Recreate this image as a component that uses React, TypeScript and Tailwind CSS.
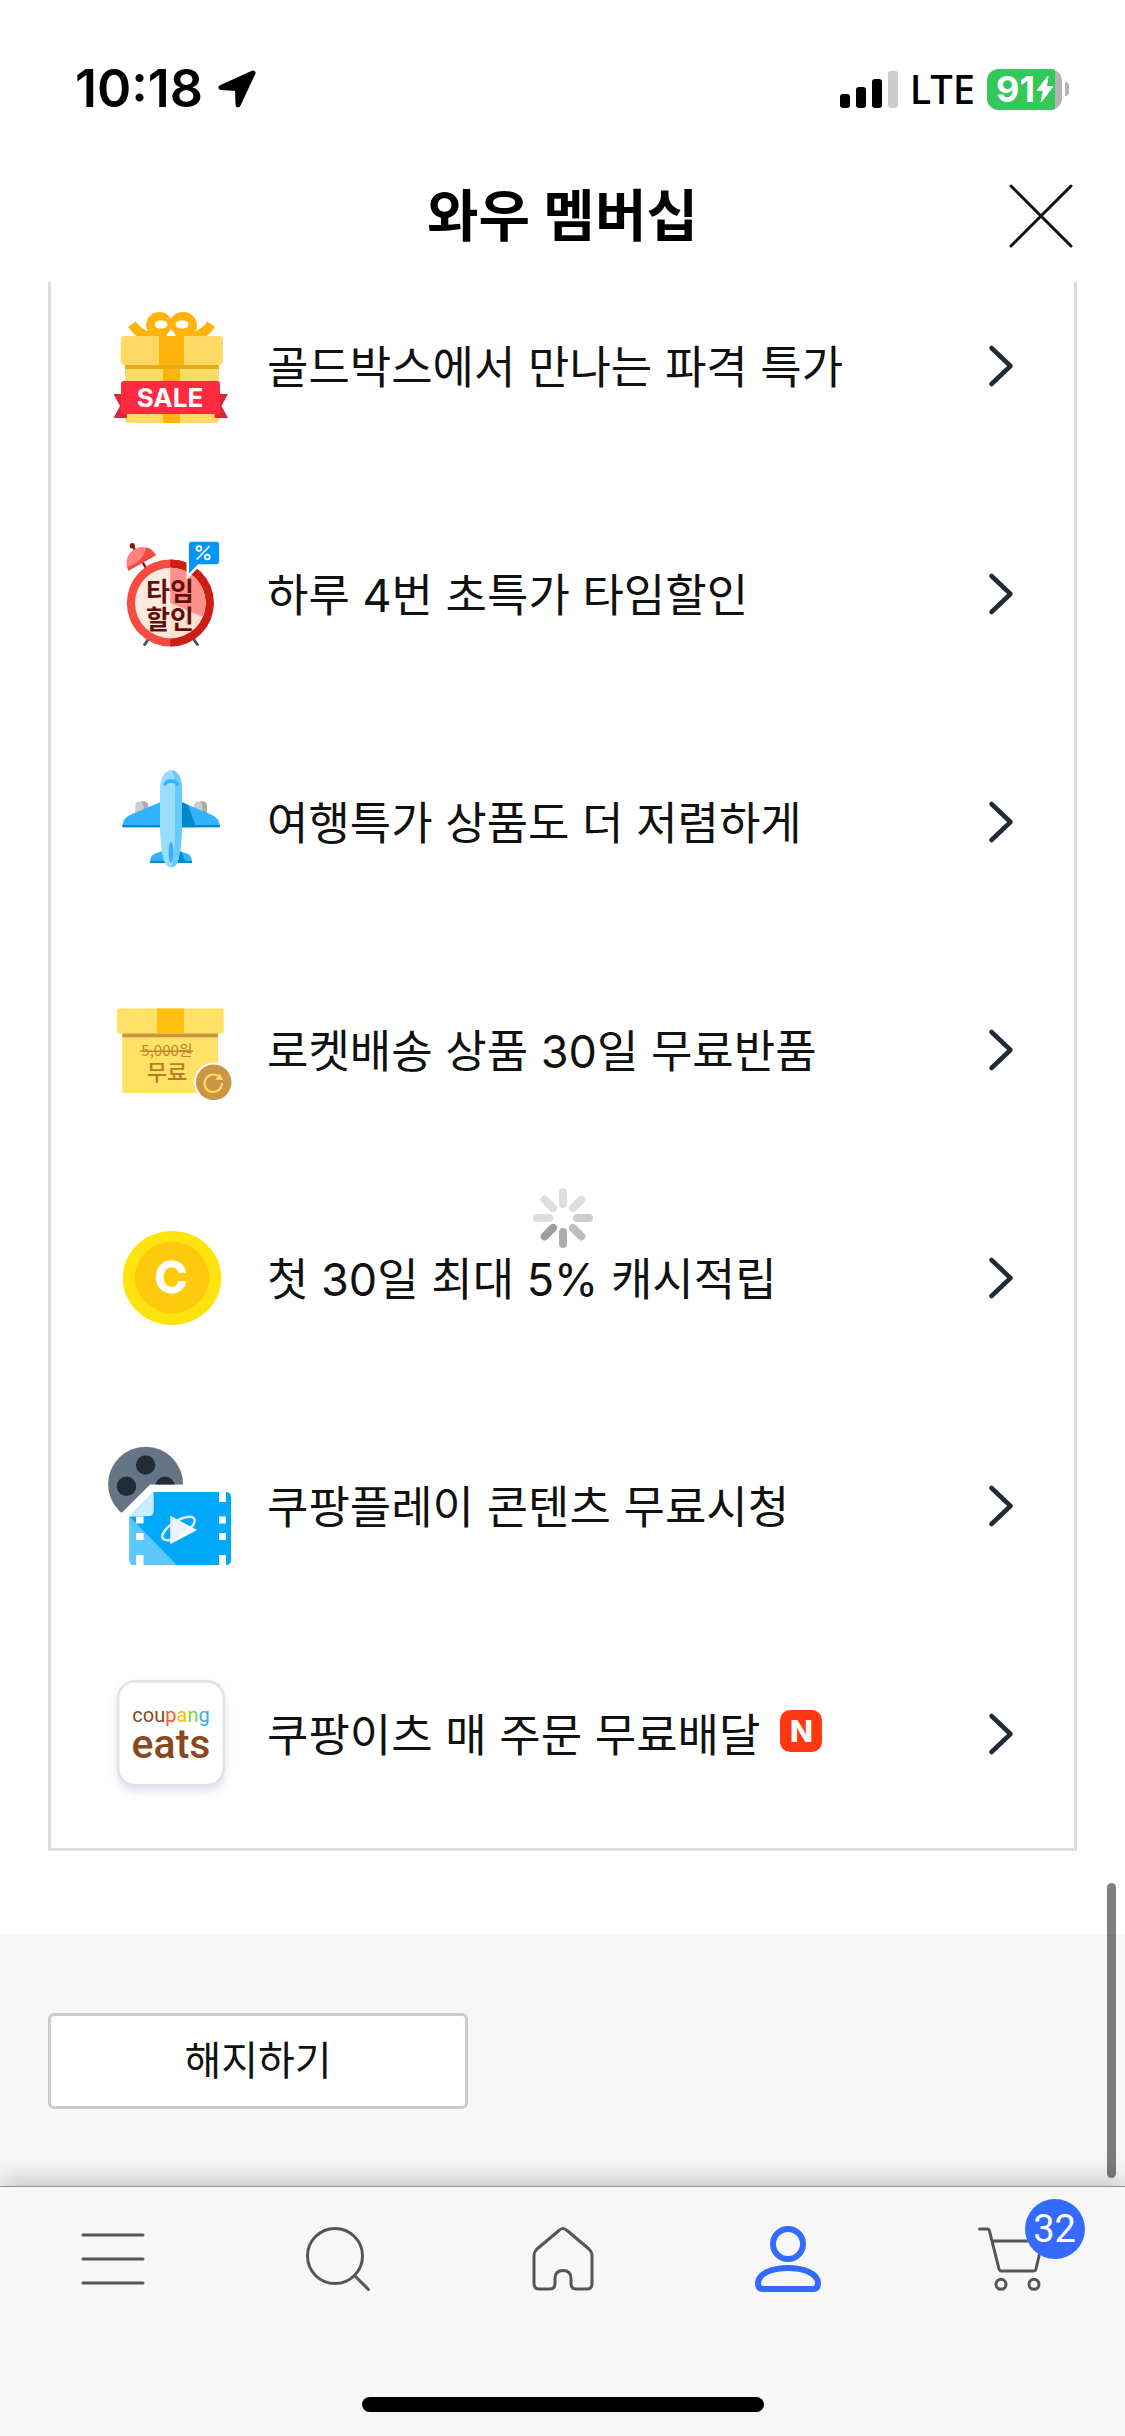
import React from 'react';

const SANS = "font-['Inter','Noto_Sans_CJK_KR',sans-serif]";

function GiftIcon() {
  return (
    <svg viewBox="0 0 132 132" className="h-full w-full" aria-hidden="true">
      <g fill="#ffb40d">
        <path fillRule="evenodd" d="M54.500 12a13 13 0 0 1 11.500 7a13 13 0 0 1 11.500-7a13.500 13.500 0 0 1 14.500 13q0 4-1.500 6q5-1 12-9.500l7.500 5.500q-4 6-10 10H33q-6-4-10-10l7.500-5.500q7 8.500 13 9.500q-2.500-2-2.500-6a13.500 13.500 0 0 1 13.500-13zM56 20.200q-6 .300-6.500 4.200q.500 3.900 6.500 4.100q6-.200 6.500-4.100q-.500-3.900-6.500-4.200zM77 20.200q-6 .300-6.500 4.200q.500 3.900 6.500 4.100q6-.200 6.500-4.100q-.500-3.900-6.500-4.200zM66 29l-4.500 6l.500 1h8.500l.300-1z" />
      </g>
      <rect x="20" y="60" width="94" height="63" rx="4" fill="#ffd966" />
      <rect x="58" y="66" width="17" height="57" fill="#ffb40d" />
      <rect x="20" y="65" width="94" height="4" fill="#e6ac15" />
      <rect x="15.700" y="36" width="102.300" height="29" rx="4" fill="#ffd966" />
      <rect x="54" y="36" width="25" height="29" fill="#ffb40d" />
      <path d="M8.500 94H22v24H8.500l6.500-12zM123 94h-13.500v24H123l-6.500-12z" fill="#d92638" />
      <rect x="16" y="81" width="99" height="33" rx="3" fill="#ff2a40" />
      <text x="65" y="107" textAnchor="middle" fontSize="26" fontWeight="700" fontFamily="Inter" fill="#fff">SALE</text>
    </svg>
  );
}

function ClockIcon() {
  return (
    <svg viewBox="0 0 132 132" className="h-full w-full" aria-hidden="true">
      <path d="M43.500 111l-4.500 6.500M88.500 111l4.500 6.500" stroke="#555" strokeWidth="3" />
      <path d="M27.500 18l3 5M37.500 34l4 7" stroke="#8c1616" strokeWidth="2.500" />
      <circle cx="27.300" cy="17.700" r="2.600" fill="#8c1616" />
      <path d="M51 27.300L23.300 42.700C17 28 29 19 37 19Q46 19 51 27.300z" fill="#ff837b" />
      <path d="M41.500 19.600Q47.500 21 51 27.300L23.300 42.700L22 39Q37 35 41.500 19.600z" fill="#f54b41" />
      <circle cx="65.300" cy="75" r="43.500" fill="#f54b41" />
      <path d="M65.300 31.500a43.500 43.500 0 0 1 0 87z" fill="#ce1d15" />
      <circle cx="65.300" cy="75" r="35.300" fill="#ffeadf" />
      <path d="M65.300 39.700a35.300 35.300 0 0 1 0 70.600z" fill="#ffdfd0" />
      <path d="M65.300 75V39.700a35.300 35.300 0 0 1 32.500 49z" fill="#ff918a" />
      <path d="M86.500 13.700H111.500a2.500 2.500 0 0 1 2.500 2.500V34a2.500 2.500 0 0 1-2.500 2.300H93L84 45.500V16.200a2.500 2.500 0 0 1 2.500-2.500z" fill="#0095ff" stroke="#fff" strokeWidth="5" paintOrder="stroke" />
      <g fill="none" stroke="#fff" strokeWidth="1.800">
        <circle cx="94" cy="20.500" r="2.400" />
        <circle cx="102.300" cy="29" r="2.400" />
        <path d="M104.700 18L91.700 31.500" />
      </g>
      <g fontSize="26" fontWeight="700" fontFamily="'Noto Sans CJK KR'" textAnchor="middle" fill="#5f100c">
        <text x="65" y="73">타임</text>
        <text x="65" y="101">할인</text>
      </g>
    </svg>
  );
}

function PlaneIcon() {
  return (
    <svg viewBox="0 0 132 132" className="h-full w-full" aria-hidden="true">
      <path d="M30.300 60V50q0-4.500 4.500-4.500h4q4.500 0 4.500 4.500v10zM89 60V50q0-4.500 4.500-4.500h4q4.500 0 4.500 4.500v10z" fill="#ccc" />
      <path d="M38 45.500q5.300 0 5.300 4.500v10H38.500V50q0-3-3-4.500zM97 45.500q5 0 5 4.500v10h-4.500V50q0-3-3-4.500z" fill="#aaa" />
      <path d="M58 45L25 59Q17.500 62 17.300 71.300H115Q114.500 62 107 59L74 45z" fill="#33b3ff" />
      <path d="M17.300 69H115v1q0 1.300-1.300 1.300H18.600q-1.300 0-1.300-1.300z" fill="#0088cc" />
      <path d="M77 46.300l6 2.500l8 22.500H77z" fill="#0088cc" />
      <path d="M58 95l-8 2.500q-5 2-5 9.500H87q0-7.500-5-9.500L74 95z" fill="#33b3ff" />
      <path d="M45 105h42v.700q0 1.300-1.300 1.300H46.300q-1.300 0-1.300-1.300zM74 95l2.500 1L81 107H70z" fill="#0088cc" />
      <path d="M55 31Q56 16 66 14Q76 16 77 31V72Q76 101 71 109Q66 114 61 109Q56 101 55 72z" fill="#9adeff" />
      <path d="M67 14Q76 16 77 31V72Q76 101 71 109Q69.500 111 66.500 111.300Q70 101 70 72V31Q70 20 67 14z" fill="#66ccff" />
      <path d="M59.500 29.500Q61 25 66 25T73 29.500" fill="none" stroke="#33b3ff" strokeWidth="3.500" />
      <ellipse cx="66" cy="96.500" rx="2.400" ry="10.500" fill="#33b3ff" />
    </svg>
  );
}

function BoxIcon() {
  return (
    <svg viewBox="0 0 132 132" className="h-full w-full" aria-hidden="true">
      <rect x="17.300" y="45" width="95.700" height="64" rx="1" fill="#ffe165" />
      <rect x="17.300" y="49" width="95.700" height="4.300" fill="#cc9543" />
      <rect x="12" y="24.500" width="106.700" height="25" rx="1.500" fill="#ffe165" />
      <rect x="52" y="24.500" width="27" height="25" fill="#ffc010" />
      <g fontFamily="'Noto Sans CJK KR'" textAnchor="middle">
        <text x="62" y="72" fontSize="15" fill="#c08632">5,000원</text>
        <text x="62" y="96" fontSize="22" fontWeight="500" fill="#b87b27">무료</text>
      </g>
      <path d="M35 67.300h53" stroke="#c08632" strokeWidth="1.500" />
      <circle cx="108.700" cy="98.300" r="19.700" fill="#fff" />
      <circle cx="108.700" cy="98.300" r="17.800" fill="#cc9543" />
      <path d="M117 99a8.700 8.700 0 1 1-4-7" fill="none" stroke="#ffe165" strokeWidth="2" />
      <path d="M114.500 89.500l3.500 6.500l-7.500-.500z" fill="#ffe165" />
    </svg>
  );
}

function CoinIcon() {
  return (
    <svg viewBox="0 0 132 132" className="h-full w-full" aria-hidden="true">
      <ellipse cx="67" cy="66" rx="49.300" ry="47" fill="#ffe30d" />
      <ellipse cx="67" cy="65.500" rx="37.300" ry="35.700" fill="#ffc90d" />
      <text x="66" y="81" textAnchor="middle" fontSize="44" fontWeight="700" fontFamily="Inter" fill="#fff" stroke="#fff" strokeWidth="1" strokeLinejoin="round">C</text>
    </svg>
  );
}

function FilmIcon() {
  return (
    <svg viewBox="0 0 132 132" className="h-full w-full" aria-hidden="true">
      <clipPath id="reel">
        <path d="M0 0H90V44.500H45.200L16.500 73L0 90z" />
      </clipPath>
      <g clipPath="url(#reel)">
        <circle cx="40.600" cy="44.200" r="37.500" fill="#667585" />
        <g fill="#222c36">
          <circle cx="40.600" cy="25" r="9.700" />
          <circle cx="21.500" cy="46.300" r="9.700" />
          <circle cx="60" cy="46.300" r="9.700" />
        </g>
      </g>
      <path d="M48.700 52H121q5 0 5 5V120q0 5-5 5H29.500q-5 0-5-5V76.700z" fill="#00a8fa" />
      <path d="M24.500 76.700L72 125H29.500q-5 0-5-5z" fill="#5cc8fb" />
      <path d="M48.700 52V71q0 5-5 5L24.500 76.700z" fill="#c9edff" />
      <g fill="#fff">
        <path d="M31 76.500h7.500v7H31zM31 93h7.500v7H31zM31 115h7.500v10.500H31zM114 51.500h7V62h-7zM114 76.500h7v7h-7zM114 93h7v7h-7zM114 115h7v10.500h-7z" />
      </g>
      <ellipse cx="73.500" cy="88.500" rx="18.500" ry="7.500" transform="rotate(-32 73.500 88.500)" fill="none" stroke="#e5eaf1" strokeWidth="2.500" />
      <path d="M65.500 76L92 90L65.500 104z" fill="#fff" />
      <path d="M65.500 76L85 86.500L65.500 104z" fill="#edf2f7" />
    </svg>
  );
}

function EatsIcon() {
  return (
    <svg viewBox="0 0 132 132" className="h-full w-full overflow-visible" aria-hidden="true">
      <rect x="13.200" y="13.200" width="105.600" height="104" rx="17" fill="#fff" stroke="#dfe3e9" strokeWidth="2.600" className="drop-shadow-[0_5px_4px_rgba(60,70,120,0.16)]" />
      <text x="66" y="54" textAnchor="middle" fontSize="20" fontWeight="400" fontFamily="Roboto" fill="#834a23">
        cou<tspan fill="#f9552f">p</tspan><tspan fill="#fcc30b">a</tspan><tspan fill="#86cf2f">n</tspan><tspan fill="#35afdc">g</tspan>
      </text>
      <text x="66" y="90" textAnchor="middle" fontSize="41" fontWeight="500" fontFamily="Roboto" fill="#884820">eats</text>
    </svg>
  );
}

const benefits: { label: string; Icon: () => React.JSX.Element; isNew?: boolean }[] = [
  { label: '골드박스에서 만나는 파격 특가', Icon: GiftIcon },
  { label: '하루 4번 초특가 타임할인', Icon: ClockIcon },
  { label: '여행특가 상품도 더 저렴하게', Icon: PlaneIcon },
  { label: '로켓배송 상품 30일 무료반품', Icon: BoxIcon },
  { label: '첫 30일 최대 5% 캐시적립', Icon: CoinIcon },
  { label: '쿠팡플레이 콘텐츠 무료시청', Icon: FilmIcon },
  { label: '쿠팡이츠 매 주문 무료배달', Icon: EatsIcon, isNew: true },
];

function StatusBar() {
  return (
    <div className="flex h-36 items-center justify-between pt-[34px] pr-14 pl-[75px] text-black">
      <div className="flex items-center gap-[14px]">
        <span className="text-[52px] leading-none font-semibold">10:18</span>
        <svg viewBox="0 0 40 40" className="h-10 w-10" aria-hidden="true">
          <path d="M36 4L4 18.500L20.500 19.500L21 36z" fill="#000" stroke="#000" strokeWidth="5" strokeLinejoin="round" />
        </svg>
      </div>
      <div className="flex items-center">
        <svg viewBox="0 0 58 38" className="h-[38px] w-[58px]" aria-hidden="true">
          <rect x="0" y="24" width="10" height="14" rx="3" />
          <rect x="16" y="17" width="10" height="21" rx="3" />
          <rect x="32" y="9" width="10" height="29" rx="3" />
          <rect x="48" y="1" width="10" height="37" rx="3" fill="#ccc" />
        </svg>
        <span className="ml-3 font-['Noto_Sans',sans-serif] text-[40px] leading-none font-medium">LTE</span>
        <div className="ml-3 flex items-center gap-[3px]">
          <div className="flex h-[41px] w-[75px] items-center overflow-hidden rounded-xl bg-[#b3b3b3]">
            <div className="flex h-full w-[68px] items-center bg-[#34c759] pl-[9px] text-white">
              <span className="text-[36px] leading-none font-bold">91</span>
              <svg viewBox="0 0 20 30" className="h-[30px] w-5 shrink-0" aria-hidden="true">
                <path d="M13 2L2 16.500H8.500L6 28L18 12.500H11.500z" fill="#fff" stroke="#fff" strokeLinejoin="round" />
              </svg>
            </div>
          </div>
          <div className="h-[14px] w-1 rounded-r-full bg-[#b3b3b3]" />
        </div>
      </div>
    </div>
  );
}

const spokes = ['#dedede', '#dedede', '#cecece', '#bebebe', '#aeaeae', '#9e9e9e', '#dedede', '#dedede'];

function Spinner() {
  return (
    <svg viewBox="-30 -30 60 60" className="absolute top-[906px] left-1/2 h-[60px] w-[60px] -translate-x-1/2" role="img" aria-label="로딩 중">
      {spokes.map((color, i) => (
        <path key={i} d="M0-14V-26" stroke={color} strokeWidth="8" strokeLinecap="round" transform={`rotate(${i * 45})`} />
      ))}
    </svg>
  );
}

function NavIcon({ children }: { children: React.ReactNode }) {
  return (
    <svg viewBox="0 0 72 72" className="h-18 w-18" fill="none" stroke="currentColor" strokeWidth="3" strokeLinecap="round" strokeLinejoin="round" aria-hidden="true">
      {children}
    </svg>
  );
}

function BottomNav() {
  return (
    <nav className="relative border-t border-[#929292] bg-[#f7f7f7] pt-9 pb-6 text-[#555] shadow-[0_-6px_24px_rgba(0,0,0,0.22)]">
      <div className="grid grid-cols-5 justify-items-center">
        <a href="#menu" aria-label="카테고리">
          <NavIcon><path d="M6 12H66M6 36H66M6 60H66" /></NavIcon>
        </a>
        <a href="#search" aria-label="검색">
          <NavIcon><circle cx="33" cy="33" r="27.500" /><path d="M53 53L66.500 66.500" /></NavIcon>
        </a>
        <a href="#home" aria-label="홈">
          <NavIcon>
            <path d="M32 7.500Q36 3.500 40 7.500L62 26Q65 29 65 32V60.500Q65 66 59.500 66H49.500Q44 66 44 60.500V55.500Q44 47.500 36 47.500T28 55.500V60.500Q28 66 22.500 66H12.500Q7 66 7 60.500V32Q7 29 10 26z" />
          </NavIcon>
        </a>
        <a href="#my" aria-label="마이쿠팡" className="text-[#346aff]">
          <NavIcon>
            <g strokeWidth="6">
              <circle cx="36" cy="21" r="15" />
              <path d="M6 60Q6 53 16 48.500Q25 45 36 45T56 48.500Q66 53 66 60Q66 66 61 66H11Q6 66 6 60z" />
            </g>
          </NavIcon>
        </a>
        <a href="#cart" aria-label="장바구니 32개" className="relative">
          <NavIcon>
            <path d="M2.500 6H10Q12 6 12.500 8L22 46Q22.500 48 24.500 48H56.500Q58.500 48 59 46L65.500 18H15.500" />
            <circle cx="24" cy="61.300" r="5" />
            <circle cx="57" cy="61.300" r="5" />
          </NavIcon>
          <span className="absolute -top-6 left-12 flex h-15 w-15 items-center justify-center rounded-full bg-[#346aff] font-['Roboto',sans-serif] text-[38px] leading-none text-white">32</span>
        </a>
      </div>
      <div className="mx-auto mt-[102px] h-[15px] w-[402px] rounded-full bg-black" />
    </nav>
  );
}

export default function App() {
  return (
    <div className={`flex min-h-screen flex-col bg-white text-[#111] ${SANS}`}>
      <header>
        <StatusBar />
        <div className="grid h-[138px] grid-cols-[1fr_auto_1fr] items-center px-12 pt-[6px]">
          <h1 className="col-start-2 text-[56px] leading-none font-bold text-black">와우 멤버십</h1>
          <button type="button" aria-label="닫기" className="justify-self-end">
            <svg viewBox="0 0 72 72" className="h-18 w-18" aria-hidden="true">
              <path d="M6 6L66 66M66 6L6 66" stroke="#111" strokeWidth="3" strokeLinecap="round" />
            </svg>
          </button>
        </div>
      </header>

      <main className="relative flex flex-1 flex-col">
        <ul className="mx-12 flex flex-col gap-[60px] border-3 border-t-0 border-[#ddd] pb-[30px]">
          {benefits.map(({ label, Icon, isNew }) => (
            <li key={label}>
              <a href="#benefit" className="flex h-[168px] items-center pr-[60px] pl-[54px]">
                <span className="h-[132px] w-[132px] shrink-0"><Icon /></span>
                <span className="ml-[30px] pt-[3px] text-[45px] leading-[66px]">{label}</span>
                {isNew && (
                  <span className="mb-[6px] ml-5 flex h-[42px] w-[42px] items-center justify-center rounded-[10px] bg-[#ff3811] text-[30px] leading-none font-extrabold text-white">N</span>
                )}
                <svg viewBox="0 0 26 44" className="ml-auto h-11 w-[26px] shrink-0" aria-hidden="true">
                  <path d="M3.500 4L22.500 22L3.500 40" fill="none" stroke="#202b37" strokeWidth="4.500" strokeLinecap="round" strokeLinejoin="round" />
                </svg>
              </a>
            </li>
          ))}
        </ul>
        <section className="mt-21 flex-1 bg-[#f7f7f7] px-12 pt-[78px] pb-[77px]">
          <button type="button" className="h-24 w-[420px] rounded-md border-3 border-[#ccc] bg-white text-[40px] leading-none">해지하기</button>
        </section>
        <Spinner />
        <div className="absolute right-[9px] bottom-2 z-10 h-[295px] w-[9px] rounded-full bg-black/50" />
      </main>

      <BottomNav />
    </div>
  );
}
